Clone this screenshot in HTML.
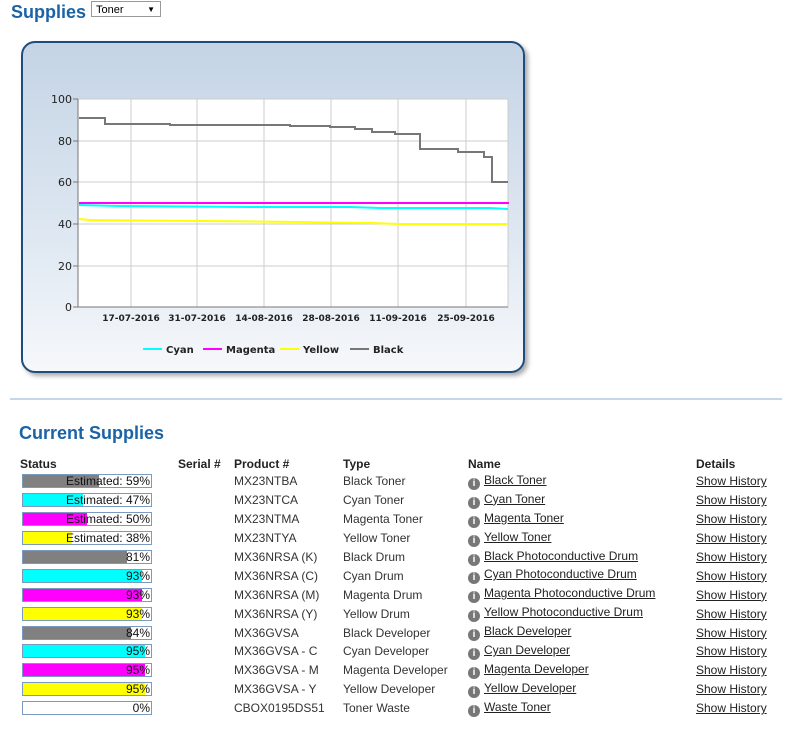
<!DOCTYPE html>
<html><head><style>
body{margin:0;background:#fff;font-family:"Liberation Sans",sans-serif;width:800px;height:731px;position:relative;overflow:hidden}
.a{position:absolute}
h1{position:absolute;left:11px;top:2px;margin:0;font-size:18px;color:#1a63a8;font-weight:bold}
h2{position:absolute;left:19px;top:423px;margin:0;font-size:18px;color:#1a63a8;font-weight:bold}
.sel{left:91px;top:1px;width:68px;height:16px;border:1px solid #999;font-size:11px;line-height:16px;padding-left:4px;box-sizing:border-box;width:70px}
.box{left:21px;top:41px;width:504px;height:332px;border:2px solid #1f4c7c;border-radius:14px;background:linear-gradient(#c4d4e5,#dfe8f2 60%,#f6f8fb);box-shadow:3px 3px 5px #aaa;box-sizing:border-box}
.hr{left:10px;top:398px;width:772px;border-top:2px solid #c6d6e6}
table{position:absolute;left:20px;top:456px;border-collapse:collapse;font-size:12px;color:#333}
td,th{padding:0;height:18.9px;white-space:nowrap;text-align:left}
th{color:#222;font-weight:bold;height:16px}
.bar{width:128px;height:12px;border:1px solid #7b9ac0;position:relative;margin-left:2px}
.bar i{position:absolute;left:0;top:0;bottom:0}
.bar span{position:absolute;right:1px;top:-1px;color:#111;font-size:12px}
a{color:#222;text-decoration:underline}
.ic{display:inline-block;width:12px;height:12px;border-radius:50%;background:#777;color:#fff;font-size:10px;font-weight:bold;text-align:center;line-height:12px;margin-right:4px;vertical-align:-2px}
</style></head><body>
<h1>Supplies</h1>
<div class="a sel">Toner<span style="position:absolute;right:5px;font-size:8px">▼</span></div>
<div class="a box"></div>
<svg class="a" style="left:0;top:0" width="540" height="380" font-family="DejaVu Sans,sans-serif">
<rect x="78" y="99" width="430" height="208" fill="#fff" stroke="#ccc"/>
<g stroke="#ccc"><line x1="131" y1="99" x2="131" y2="307"/><line x1="197" y1="99" x2="197" y2="307"/><line x1="264" y1="99" x2="264" y2="307"/><line x1="331" y1="99" x2="331" y2="307"/><line x1="398" y1="99" x2="398" y2="307"/><line x1="466" y1="99" x2="466" y2="307"/>
<line x1="78" y1="141" x2="508" y2="141"/><line x1="78" y1="182" x2="508" y2="182"/><line x1="78" y1="224" x2="508" y2="224"/><line x1="78" y1="266" x2="508" y2="266"/></g>
<line x1="78" y1="99" x2="78" y2="307" stroke="#777"/><line x1="78" y1="307" x2="508" y2="307" stroke="#777"/>
<g stroke="#777"><line x1="73" y1="99" x2="78" y2="99"/><line x1="73" y1="141" x2="78" y2="141"/><line x1="73" y1="182" x2="78" y2="182"/><line x1="73" y1="224" x2="78" y2="224"/><line x1="73" y1="266" x2="78" y2="266"/><line x1="73" y1="307" x2="78" y2="307"/></g>
<g font-size="11" text-anchor="end" fill="#222"><text x="72" y="103">100</text><text x="72" y="145">80</text><text x="72" y="186">60</text><text x="72" y="228">40</text><text x="72" y="270">20</text><text x="72" y="311">0</text></g>
<g font-size="9" font-weight="bold" text-anchor="middle" fill="#222"><text x="131" y="321">17-07-2016</text><text x="197" y="321">31-07-2016</text><text x="264" y="321">14-08-2016</text><text x="331" y="321">28-08-2016</text><text x="398" y="321">11-09-2016</text><text x="466" y="321">25-09-2016</text></g>
<polyline fill="none" stroke="#ff0" stroke-width="2" points="79,219 90,220 200,221 300,222 370,223 400,224 508,224"/>
<polyline fill="none" stroke="#0ff" stroke-width="2" points="79,205 120,206 250,207 350,207 380,208 420,208 490,208 508,209"/>
<polyline fill="none" stroke="#f0f" stroke-width="2" points="79,203 508,203 508,204"/>
<polyline fill="none" stroke="#777" stroke-width="2" points="79,118 105,118 105,124 170,124 170,125 290,125 290,126 330,126 330,127 355,127 355,129 372,129 372,132 395,132 395,134 420,134 420,149 458,149 458,152 484,152 484,157 492,157 492,182 508,182"/>
<g font-size="10" font-weight="bold" fill="#222"><line x1="143" y1="349" x2="162" y2="349" stroke="#0ff" stroke-width="2"/><text x="166" y="353">Cyan</text>
<line x1="203" y1="349" x2="222" y2="349" stroke="#f0f" stroke-width="2"/><text x="226" y="353">Magenta</text>
<line x1="280" y1="349" x2="299" y2="349" stroke="#ff0" stroke-width="2"/><text x="303" y="353">Yellow</text>
<line x1="350" y1="349" x2="369" y2="349" stroke="#777" stroke-width="2"/><text x="373" y="353">Black</text></g>
</svg>
<div class="a hr"></div>
<h2>Current Supplies</h2>
<table>
<tr><th style="width:158px">Status</th><th style="width:56px">Serial #</th><th style="width:109px">Product #</th><th style="width:125px">Type</th><th style="width:228px">Name</th><th>Details</th></tr>
<tr><td><div class="bar"><i style="width:59%;background:#808080"></i><span>Estimated: 59%</span></div></td><td></td><td>MX23NTBA</td><td>Black Toner</td><td><span class="ic">i</span><a>Black Toner</a></td><td><a>Show History</a></td></tr>
<tr><td><div class="bar"><i style="width:47%;background:#0ff"></i><span>Estimated: 47%</span></div></td><td></td><td>MX23NTCA</td><td>Cyan Toner</td><td><span class="ic">i</span><a>Cyan Toner</a></td><td><a>Show History</a></td></tr>
<tr><td><div class="bar"><i style="width:50%;background:#f0f"></i><span>Estimated: 50%</span></div></td><td></td><td>MX23NTMA</td><td>Magenta Toner</td><td><span class="ic">i</span><a>Magenta Toner</a></td><td><a>Show History</a></td></tr>
<tr><td><div class="bar"><i style="width:38%;background:#ff0"></i><span>Estimated: 38%</span></div></td><td></td><td>MX23NTYA</td><td>Yellow Toner</td><td><span class="ic">i</span><a>Yellow Toner</a></td><td><a>Show History</a></td></tr>
<tr><td><div class="bar"><i style="width:81%;background:#808080"></i><span>81%</span></div></td><td></td><td>MX36NRSA (K)</td><td>Black Drum</td><td><span class="ic">i</span><a>Black Photoconductive Drum</a></td><td><a>Show History</a></td></tr>
<tr><td><div class="bar"><i style="width:93%;background:#0ff"></i><span>93%</span></div></td><td></td><td>MX36NRSA (C)</td><td>Cyan Drum</td><td><span class="ic">i</span><a>Cyan Photoconductive Drum</a></td><td><a>Show History</a></td></tr>
<tr><td><div class="bar"><i style="width:93%;background:#f0f"></i><span>93%</span></div></td><td></td><td>MX36NRSA (M)</td><td>Magenta Drum</td><td><span class="ic">i</span><a>Magenta Photoconductive Drum</a></td><td><a>Show History</a></td></tr>
<tr><td><div class="bar"><i style="width:93%;background:#ff0"></i><span>93%</span></div></td><td></td><td>MX36NRSA (Y)</td><td>Yellow Drum</td><td><span class="ic">i</span><a>Yellow Photoconductive Drum</a></td><td><a>Show History</a></td></tr>
<tr><td><div class="bar"><i style="width:84%;background:#808080"></i><span>84%</span></div></td><td></td><td>MX36GVSA</td><td>Black Developer</td><td><span class="ic">i</span><a>Black Developer</a></td><td><a>Show History</a></td></tr>
<tr><td><div class="bar"><i style="width:95%;background:#0ff"></i><span>95%</span></div></td><td></td><td>MX36GVSA - C</td><td>Cyan Developer</td><td><span class="ic">i</span><a>Cyan Developer</a></td><td><a>Show History</a></td></tr>
<tr><td><div class="bar"><i style="width:95%;background:#f0f"></i><span>95%</span></div></td><td></td><td>MX36GVSA - M</td><td>Magenta Developer</td><td><span class="ic">i</span><a>Magenta Developer</a></td><td><a>Show History</a></td></tr>
<tr><td><div class="bar"><i style="width:95%;background:#ff0"></i><span>95%</span></div></td><td></td><td>MX36GVSA - Y</td><td>Yellow Developer</td><td><span class="ic">i</span><a>Yellow Developer</a></td><td><a>Show History</a></td></tr>
<tr><td><div class="bar"><span>0%</span></div></td><td></td><td>CBOX0195DS51</td><td>Toner Waste</td><td><span class="ic">i</span><a>Waste Toner</a></td><td><a>Show History</a></td></tr>
</table>
</body></html>
